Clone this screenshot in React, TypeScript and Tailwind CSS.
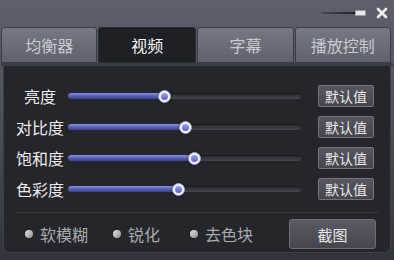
import React from 'react';

const sliders = [
  { label: '亮度', value: 0.41 },
  { label: '对比度', value: 0.5 },
  { label: '饱和度', value: 0.54 },
  { label: '色彩度', value: 0.47 },
];

const tabs = ['均衡器', '视频', '字幕', '播放控制'];

const Slider: React.FC<{ value: number }> = ({ value }) => (
  <div className="relative w-[233px] h-[14px] flex items-center">
    <div className="w-full h-[6px] rounded-full bg-gradient-to-b from-[#2a2b31] to-[#45464e] border-t border-[#18191d]" />
    <div
      className="absolute left-0 h-[6px] rounded-full bg-gradient-to-b from-[#8a8fe0] via-[#5a60b8] to-[#3c418c]"
      style={{ width: `${value * 100}%` }}
    />
    <div
      className="absolute w-[13px] h-[13px] -ml-[6px] rounded-full bg-[#f2f3f8] border border-[#a0a4d0] flex items-center justify-center shadow-[0_0_2px_rgba(0,0,0,0.6)]"
      style={{ left: `${value * 100}%` }}
    >
      <div className="w-[7px] h-[7px] rounded-full bg-gradient-to-b from-[#9aa0e8] to-[#5b61c0]" />
    </div>
  </div>
);

const Radio: React.FC<{ label: string; className?: string }> = ({ label, className }) => (
  <div className={`flex items-center gap-[7px] ${className ?? ''}`}>
    <div className="w-[8px] h-[8px] rounded-full bg-gradient-to-br from-[#e6e6e8] to-[#8c8d92]" />
    <span className="text-[16px] text-[#a9aaae] leading-none">{label}</span>
  </div>
);

export default function App() {
  return (
    <div
      className="w-[394px] h-[260px] overflow-hidden flex flex-col bg-gradient-to-b from-[#5d5f6a] via-[#4b4d57] to-[#32333a]"
      style={{ fontFamily: '"Noto Sans CJK SC", "Noto Sans", sans-serif' }}
    >
      {/* title bar */}
      <div className="h-[27px] flex items-start justify-end pr-[6px] pt-[7px]">
        <div className="flex items-center mt-[3px]">
          <div className="w-[34px] h-[2px] bg-gradient-to-r from-[#4a4c56] to-[#1e1f24]" />
          <div className="w-[11px] h-[6px] bg-[#e8e9ee] border border-[#9a9ba2]" />
        </div>
        <svg width="12" height="12" viewBox="0 0 12 12" className="ml-[10px]">
          <path d="M2 2 L10 10 M10 2 L2 10" stroke="#f0f0f2" strokeWidth="2.6" strokeLinecap="round" />
        </svg>
      </div>

      {/* tabs */}
      <div className="h-[36px] flex gap-[1px] pl-[1px] pr-[3px]">
        {tabs.map((t, i) =>
          i === 1 ? (
            <div
              key={t}
              className="w-[98px] flex items-center justify-center bg-[#1f2026] border border-[#2a2b31] text-[#f4f4f6] text-[16px] rounded-t-[3px]"
            >
              {t}
            </div>
          ) : (
            <div
              key={t}
              className="flex-1 flex items-center justify-center bg-gradient-to-b from-[#767884] to-[#5f616c] border border-[#3c3e47] text-[#c9cacf] text-[16px] rounded-t-[3px]"
            >
              {t}
            </div>
          )
        )}
      </div>
      <div className="h-[3px] bg-[#3b3d45] mx-[1px]" />

      {/* panel */}
      <div className="mx-[3px] h-[187px] bg-[#25262c] border border-[#3d3e46] border-t-0 rounded-b-[6px] flex flex-col">
        <div className="flex flex-col gap-[9px] pt-[19px]">
          {sliders.map((s) => (
            <div key={s.label} className="flex items-center h-[22px]">
              <div className="w-[64px] text-center text-[16px] text-[#ececee] leading-none pl-[8px]">{s.label}</div>
              <Slider value={s.value} />
              <button className="ml-[17px] w-[56px] h-[22px] bg-gradient-to-b from-[#55565e] to-[#45464d] border border-[#74757c] rounded-[2px] text-[14px] text-[#e8e8ea] leading-none">
                默认值
              </button>
            </div>
          ))}
        </div>
        <div className="mx-[11px] mt-[12px] h-[1px] bg-[#3a3b42]" />
        <div className="flex items-center pl-[21px] mt-[6px]">
          <Radio label="软模糊" />
          <Radio label="锐化" className="ml-[25px]" />
          <Radio label="去色块" className="ml-[30px]" />
          <button className="ml-[36px] w-[87px] h-[30px] bg-gradient-to-b from-[#5a5b63] to-[#45464d] border border-[#6e6f76] rounded-[3px] text-[15px] text-[#e6e6e8] leading-none">
            截图
          </button>
        </div>
      </div>
    </div>
  );
}
